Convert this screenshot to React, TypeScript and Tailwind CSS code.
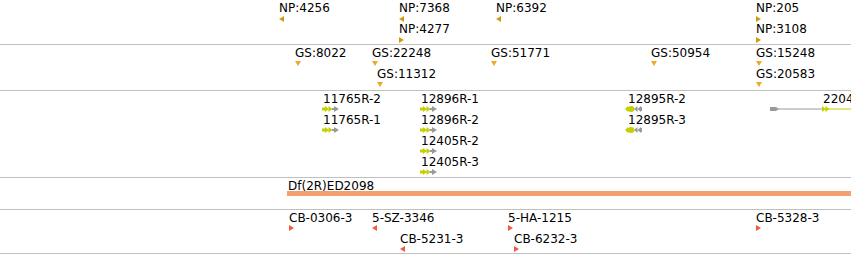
import React from "react";

type Dir = "left" | "right" | "down";

interface Feat {
  label: string;
  x: number;
  slot: number;
  dir: Dir;
}

const npColor = "#d49a10";
const gsColor = "#f0a828";
const cbColor = "#f45a3c";
const yellow = "#c4d000";
const grey = "#9a9a9a";

function Marker({ dir, color }: { dir: Dir; color: string }) {
  if (dir === "down") {
    return (
      <svg width="6" height="5" viewBox="0 0 6 5" className="block">
        <path d="M0 0H6L3 5Z" fill={color} />
      </svg>
    );
  }
  return (
    <svg width="5" height="6" viewBox="0 0 5 6" className="block">
      <path d={dir === "left" ? "M5 0V6L0 3Z" : "M0 0V6L5 3Z"} fill={color} />
    </svg>
  );
}

// small read glyph: yellow part + grey part
function Read({ reverse }: { reverse?: boolean }) {
  if (reverse) {
    return (
      <svg width="18" height="6" viewBox="0 0 18 6" className="block">
        <path d="M0 3L3 0V6Z" fill={yellow} />
        <ellipse cx="6" cy="3" rx="3.5" ry="3" fill={yellow} />
        <path d="M9 3L12.5 0V6Z M12.5 3L16 0V6Z" fill={grey} />
        <rect x="15" y="1" width="2" height="4" fill={grey} />
      </svg>
    );
  }
  return (
    <svg width="18" height="6" viewBox="0 0 18 6" className="block">
      <rect x="0" y="1.5" width="4" height="3" fill={yellow} />
      <path d="M3 0L7 3L3 6Z M6.5 0L10.5 3L6.5 6Z" fill={yellow} />
      <rect x="10" y="2" width="3" height="2" fill={grey} />
      <path d="M12 0L17 3L12 6Z" fill={grey} />
    </svg>
  );
}

function Label({ text, x, top }: { text: string; x: number; top: number }) {
  return (
    <div
      className="absolute whitespace-nowrap text-[12px] leading-[14px] text-black"
      style={{ left: x, top }}
    >
      {text}
    </div>
  );
}

function MarkerTrack({
  feats,
  color,
  height,
  first,
  step,
  gap,
}: {
  feats: Feat[];
  color: string;
  height: string;
  first: number;
  step: number;
  gap: number;
}) {
  return (
    <div className={`relative ${height} shrink-0 border-b border-[#c0c0c0]`}>
      {feats.map((f) => {
        const cap = first + step * f.slot;
        return (
          <React.Fragment key={f.label}>
            <Label text={f.label} x={f.x} top={cap - 3} />
            <div className="absolute" style={{ left: f.x, top: cap + gap }}>
              <Marker dir={f.dir} color={color} />
            </div>
          </React.Fragment>
        );
      })}
    </div>
  );
}

const np: Feat[] = [
  { label: "NP:4256", x: 279, slot: 0, dir: "left" },
  { label: "NP:7368", x: 399, slot: 0, dir: "left" },
  { label: "NP:4277", x: 399, slot: 1, dir: "right" },
  { label: "NP:6392", x: 496, slot: 0, dir: "left" },
  { label: "NP:205", x: 756, slot: 0, dir: "right" },
  { label: "NP:3108", x: 756, slot: 1, dir: "right" },
];

const gs: Feat[] = [
  { label: "GS:8022", x: 295, slot: 0, dir: "down" },
  { label: "GS:22248", x: 372, slot: 0, dir: "down" },
  { label: "GS:11312", x: 377, slot: 1, dir: "down" },
  { label: "GS:51771", x: 491, slot: 0, dir: "down" },
  { label: "GS:50954", x: 651, slot: 0, dir: "down" },
  { label: "GS:15248", x: 756, slot: 0, dir: "down" },
  { label: "GS:20583", x: 756, slot: 1, dir: "down" },
];

const cb: Feat[] = [
  { label: "CB-0306-3", x: 289, slot: 0, dir: "right" },
  { label: "5-SZ-3346", x: 372, slot: 0, dir: "left" },
  { label: "CB-5231-3", x: 400, slot: 1, dir: "left" },
  { label: "5-HA-1215", x: 508, slot: 0, dir: "right" },
  { label: "CB-6232-3", x: 514, slot: 1, dir: "right" },
  { label: "CB-5328-3", x: 756, slot: 0, dir: "right" },
];

const reads = [
  { label: "11765R-2", x: 323, slot: 0, reverse: false },
  { label: "11765R-1", x: 323, slot: 1, reverse: false },
  { label: "12896R-1", x: 421, slot: 0, reverse: false },
  { label: "12896R-2", x: 421, slot: 1, reverse: false },
  { label: "12405R-2", x: 421, slot: 2, reverse: false },
  { label: "12405R-3", x: 421, slot: 3, reverse: false },
  { label: "12895R-2", x: 628, slot: 0, reverse: true },
  { label: "12895R-3", x: 628, slot: 1, reverse: true },
];

export default function App() {
  return (
    <div
      className="flex h-[255px] w-[851px] flex-col overflow-hidden bg-white"
      style={{ fontFamily: '"DejaVu Sans", Verdana, sans-serif' }}
    >
      <MarkerTrack feats={np} color={npColor} height="h-[45px]" first={4} step={21} gap={12} />
      <MarkerTrack feats={gs} color={gsColor} height="h-[46px]" first={4} step={21} gap={12} />

      {/* reads */}
      <div className="relative h-[87px] shrink-0 border-b border-[#c0c0c0]">
        {reads.map((r) => {
          const cap = 4 + 21 * r.slot;
          return (
            <React.Fragment key={r.label}>
              <Label text={r.label} x={r.x} top={cap - 3} />
              <div className="absolute" style={{ left: r.reverse ? r.x - 3 : r.x - 1, top: cap + 11 }}>
                <Read reverse={r.reverse} />
              </div>
            </React.Fragment>
          );
        })}
        {/* paired read crossing the right edge */}
        <Label text="22045R-1" x={823} top={1} />
        <div className="absolute left-[770px] top-[15px] right-0">
          <svg width="81" height="6" viewBox="0 0 81 6" className="block">
            <path d="M0 1H6L9 3L6 5H0Z" fill={grey} />
            <rect x="8" y="2.5" width="45" height="1" fill={grey} />
            <path d="M52 0L56 3L52 6Z M55.5 0L59.5 3L55.5 6Z" fill={yellow} />
            <rect x="59" y="2.5" width="22" height="1" fill={yellow} />
          </svg>
        </div>
      </div>

      {/* deficiency */}
      <div className="relative h-[32px] shrink-0 border-b border-[#c0c0c0]">
        <Label text="Df(2R)ED2098" x={288} top={1} />
        <div className="absolute left-[287px] right-0 top-[13px] h-[5px] bg-[#f2a06e]" />
      </div>

      <MarkerTrack feats={cb} color={cbColor} height="h-[44px]" first={4} step={21} gap={11} />
    </div>
  );
}
